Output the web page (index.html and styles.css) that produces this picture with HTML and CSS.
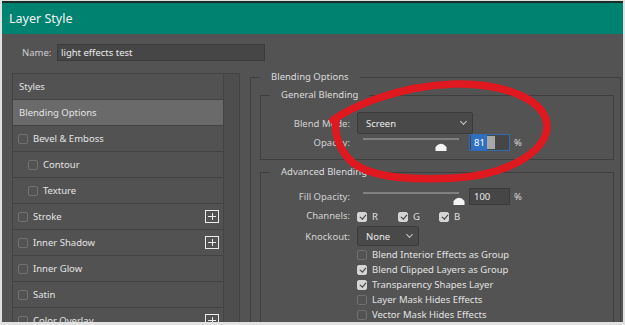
FILE: index.html
```html
<!DOCTYPE html>
<html lang="en">
<head>
  <meta charset="UTF-8">
  <meta name="viewport" content="width=device-width, initial-scale=1.0">
  <title>Layer Style</title>
  <link rel="stylesheet" href="styles.css">
</head>
<body>
  <div class="window">
    <div class="titlebar">Layer Style</div>

    <div class="content">
      <div class="name-row">
        <label class="name-label">Name:</label>
        <div class="name-input">light effects test</div>
      </div>

      <div class="main">
        <div class="styles-panel">
          <ul class="style-list">
            <li class="style-item">Styles</li>
            <li class="style-item selected">Blending Options</li>
            <li class="style-item"><span class="box"></span>Bevel &amp; Emboss</li>
            <li class="style-item sub"><span class="box"></span>Contour</li>
            <li class="style-item sub"><span class="box"></span>Texture</li>
            <li class="style-item"><span class="box"></span>Stroke<span class="plus"></span></li>
            <li class="style-item"><span class="box"></span>Inner Shadow<span class="plus"></span></li>
            <li class="style-item"><span class="box"></span>Inner Glow</li>
            <li class="style-item"><span class="box"></span>Satin</li>
            <li class="style-item"><span class="box"></span>Color Overlay<span class="plus"></span></li>
          </ul>
          <div class="scroll-track"></div>
        </div>

        <fieldset class="group outer">
          <legend>Blending Options</legend>

          <fieldset class="group">
            <legend>General Blending</legend>
            <div class="form">
              <span class="label">Blend Mode:</span>
              <div class="select wide">Screen<span class="chevron"></span></div>

              <span class="label">Opacity:</span>
              <div class="slider-row">
                <div class="slider">
                  <div class="track"></div>
                  <svg class="thumb" style="margin-left: 72px" width="12" height="9" viewBox="0 0 12 9"><path d="M0.5 9 L0.5 5 Q6 -1.5 11.5 5 L11.5 9 Z" fill="#f4f4f4"/></svg>
                </div>
                <div class="num focused"><span class="sel">81</span><span class="caret"></span></div>
                <span class="pct">%</span>
              </div>
            </div>
          </fieldset>

          <fieldset class="group advanced">
            <legend>Advanced Blending</legend>
            <div class="form">
              <span class="label">Fill Opacity:</span>
              <div class="slider-row">
                <div class="slider">
                  <div class="track"></div>
                  <svg class="thumb" style="margin-left: 90px" width="12" height="9" viewBox="0 0 12 9"><path d="M0.5 9 L0.5 5 Q6 -1.5 11.5 5 L11.5 9 Z" fill="#f4f4f4"/></svg>
                </div>
                <div class="num">100</div>
                <span class="pct">%</span>
              </div>

              <span class="label">Channels:</span>
              <div class="channels">
                <span class="check on"></span><span class="ch">R</span>
                <span class="check on"></span><span class="ch">G</span>
                <span class="check on"></span><span class="ch">B</span>
              </div>

              <span class="label">Knockout:</span>
              <div class="select narrow">None<span class="chevron"></span></div>
            </div>

            <ul class="options">
              <li><span class="check"></span>Blend Interior Effects as Group</li>
              <li><span class="check on"></span>Blend Clipped Layers as Group</li>
              <li><span class="check on"></span>Transparency Shapes Layer</li>
              <li><span class="check"></span>Layer Mask Hides Effects</li>
              <li><span class="check"></span>Vector Mask Hides Effects</li>
            </ul>
          </fieldset>
        </fieldset>
      </div>
    </div>
  </div>

  <!-- red marker scribble drawn over the dialog -->
  <svg class="markup" width="625" height="325" viewBox="0 0 625 325">
    <path d="M333 120 C 350 108, 395 86, 455 84 C 505 83, 545 100, 547 125 C 548 150, 510 175, 455 178 C 400 181, 362 175, 348 158 C 338 146, 334 132, 336 121"
          fill="none" stroke="#e01820" stroke-width="7.5" stroke-linecap="round" stroke-linejoin="round"/>
  </svg>
</body>
</html>
```

FILE: styles.css
```css
body {
  margin: 0;
  width: 625px;
  height: 325px;
  background-color: #e2e2e2;
  font-family: 'Segoe UI', 'Noto Sans', sans-serif;
  font-size: 9.5px;
  position: relative;
  overflow: hidden;
}
.window {
  margin: 1px 2px 0 2px;
  width: 621px;
  height: 321px;
  border-top: 2px solid #1c2a28;
  box-sizing: border-box;
  display: flex;
  flex-direction: column;
  overflow: hidden;
}
.titlebar {
  height: 31px;
  line-height: 31px;
  padding-left: 7px;
  background-color: #008270;
  color: #f2f2f2;
  font-size: 12.5px;
  flex-shrink: 0;
}
.content {
  flex: 1;
  background-color: #535353;
  padding: 10px 2px 0 10px;
  display: flex;
  flex-direction: column;
  color: #d8d8d8;
}
.name-row {
  display: flex;
  align-items: center;
  height: 17px;
}
.name-label {
  margin-left: 10px;
  width: 35px;
  color: #d0d0d0;
}
.name-input {
  width: 208px;
  height: 17px;
  box-sizing: border-box;
  background-color: #464646;
  border: 1px solid #3b3b3b;
  color: #ececec;
  padding-left: 3px;
  line-height: 15px;
}
.main {
  display: flex;
  margin-top: 10px;
  gap: 10px;
  flex: 1;
}
.styles-panel {
  margin-top: 2px;
  width: 228px;
  border: 1px solid #434343;
  border-bottom: none;
  box-sizing: border-box;
  display: flex;
  background-color: #4f4f4f;
}
.style-list {
  list-style: none;
  margin: 0;
  padding: 0;
  width: 210px;
  background-color: #525252;
  border-right: 1px solid #444;
}
.style-item {
  height: 26px;
  box-sizing: border-box;
  border-bottom: 1px solid #424242;
  display: flex;
  align-items: center;
  padding: 0 4px 0 6px;
  color: #e4e4e4;
}
.style-item.selected {
  background-color: #6a6a6a;
}
.style-item .box {
  margin-left: -1px;
}
.style-item.sub {
  padding-left: 16px;
}
.box {
  width: 10px;
  height: 10px;
  box-sizing: border-box;
  border: 1px solid #727272;
  border-radius: 2px;
  margin-right: 5px;
}
.plus {
  margin-left: auto;
  width: 14px;
  height: 13px;
  box-sizing: border-box;
  border: 1px solid #ececec;
  position: relative;
}
.plus::before,
.plus::after {
  content: '';
  position: absolute;
  background-color: #ececec;
}
.plus::before {
  left: 2px;
  right: 2px;
  top: 5px;
  height: 1px;
}
.plus::after {
  top: 2px;
  bottom: 2px;
  left: 5.5px;
  width: 1px;
}
.scroll-track {
  flex: 1;
  background-color: #4e4e4e;
}
.group {
  margin: 0;
  border: 1px solid #3f3f3f;
  padding: 0 0 8px 9px;
  min-width: 0;
}
.group legend {
  padding: 0 11px;
  line-height: 12px;
  color: #dcdcdc;
}
.outer {
  width: 371px;
  box-sizing: border-box;
  padding: 6px 6px 0 9px;
  border-bottom: none;
}
.outer > .group {
  width: 354px;
  box-sizing: border-box;
}
.advanced {
  margin-top: 6px;
  border-bottom: none;
}
.form {
  display: grid;
  grid-template-columns: 80px auto;
  column-gap: 7px;
  align-items: center;
  margin-top: 11px;
}
.advanced .form {
  margin-top: 10px;
}
.label {
  text-align: right;
  color: #d2d2d2;
}
.select {
  height: 22px;
  box-sizing: border-box;
  background-color: #494949;
  border: 1px solid #3a3a3a;
  border-radius: 2px;
  color: #ececec;
  display: flex;
  align-items: center;
  padding-left: 8px;
  position: relative;
}
.select.wide {
  width: 116px;
}
.select.narrow {
  width: 62px;
  height: 20px;
  margin-top: 0;
}
.chevron {
  position: absolute;
  right: 6px;
  top: 50%;
  width: 4px;
  height: 4px;
  margin-top: -4px;
  border-right: 1px solid #c8c8c8;
  border-bottom: 1px solid #c8c8c8;
  transform: rotate(45deg);
}
.slider-row {
  display: flex;
  align-items: flex-start;
  height: 17px;
}
.slider {
  width: 112px;
  padding-left: 6px;
  box-sizing: border-box;
}
.track {
  width: 96px;
  height: 2px;
  margin-top: 4px;
  background-color: #808080;
}
.thumb {
  display: block;
  margin-top: 2px;
}
.num {
  width: 41px;
  height: 17px;
  box-sizing: border-box;
  background-color: #464646;
  border: 1px solid #3a3a3a;
  color: #ececec;
  padding-left: 4px;
  line-height: 15px;
  display: flex;
}
.num.focused {
  border-color: #2f6bb0;
  padding-left: 1px;
}
.sel {
  background-color: #2f70c4;
  color: #fff;
  padding: 0 2px 0 3px;
}
.caret {
  width: 8px;
  background-color: #a8a8a8;
  margin: 1px 0;
}
.pct {
  margin-left: 4px;
  line-height: 17px;
  color: #d8d8d8;
}
.check {
  width: 10px;
  height: 10px;
  box-sizing: border-box;
  border: 1px solid #707070;
  border-radius: 2px;
  flex-shrink: 0;
}
.check.on {
  background-color: #d4d4d4;
  border-color: #d4d4d4;
  position: relative;
}
.check.on::after {
  content: '';
  position: absolute;
  left: 2.5px;
  top: 0.5px;
  width: 2.5px;
  height: 5px;
  border-right: 1.5px solid #3a3a3a;
  border-bottom: 1.5px solid #3a3a3a;
  transform: rotate(40deg);
}
.channels {
  display: flex;
  align-items: center;
  height: 19px;
  margin-top: 2px;
}
.ch {
  margin-left: 5px;
  width: 26px;
  color: #e0e0e0;
}
.options {
  list-style: none;
  margin: 1px 0 0 87px;
  padding: 0;
}
.options li {
  display: flex;
  align-items: center;
  height: 15px;
  gap: 5px;
  color: #e2e2e2;
}
.markup {
  position: absolute;
  left: 0;
  top: 0;
  pointer-events: none;
}
```
